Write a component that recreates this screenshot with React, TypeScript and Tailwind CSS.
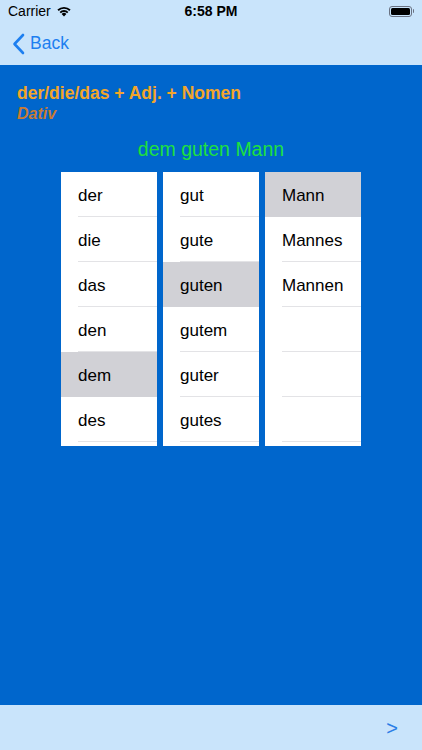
import React from "react";

const columns: { items: string[]; selected: number }[] = [
  { items: ["der", "die", "das", "den", "dem", "des"], selected: 4 },
  { items: ["gut", "gute", "guten", "gutem", "guter", "gutes"], selected: 2 },
  { items: ["Mann", "Mannes", "Mannen", "", "", ""], selected: 0 },
];

function StatusBar() {
  return (
    <div className="relative flex h-[22px] items-center px-2 text-[14px] text-black">
      <div className="flex items-center gap-[5px]">
        <span>Carrier</span>
        <svg width="16" height="12" viewBox="0 0 16 12">
          <path d="M8 11.5 L5.6 8.9 A3.4 3.4 0 0 1 10.4 8.9 Z" fill="black" />
          <path d="M3.6 6.9 A6.2 6.2 0 0 1 12.4 6.9 L11.1 8.2 A4.4 4.4 0 0 0 4.9 8.2 Z" fill="black" />
          <path d="M1.4 4.6 A9.4 9.4 0 0 1 14.6 4.6 L13.3 5.9 A7.6 7.6 0 0 0 2.7 5.9 Z" fill="black" />
        </svg>
      </div>
      <span className="absolute left-1/2 -translate-x-1/2 font-bold">6:58 PM</span>
      <div className="ml-auto flex items-center">
        <div className="flex h-[11px] w-[23px] items-center rounded-[3px] border border-gray-500 p-[1px]">
          <div className="h-full w-full rounded-[1.5px] bg-black" />
        </div>
        <div className="ml-[1px] h-[4px] w-[1.5px] rounded-r bg-gray-500" />
      </div>
    </div>
  );
}

function NavBar() {
  return (
    <div className="flex h-[43px] items-center pl-[12px] text-[#1d7ff0]">
      <svg width="13" height="22" viewBox="0 0 13 22" fill="none">
        <path d="M11 2 L2.5 11 L11 20" stroke="currentColor" strokeWidth="2.6" strokeLinecap="round" strokeLinejoin="round" />
      </svg>
      <span className="ml-[5px] text-[17.5px]">Back</span>
    </div>
  );
}

export default function App() {
  return (
    <div
      className="flex h-[750px] w-[422px] flex-col overflow-hidden bg-[#c9e4fb]"
      style={{ fontFamily: '"Liberation Sans", Arial, sans-serif' }}
    >
      <StatusBar />
      <NavBar />
      <main className="flex h-[640px] flex-col bg-[#0066cc] pt-[18px]">
        <div className="px-[17px]">
          <h1 className="text-[17.5px] font-bold leading-[20px] text-[#f2a52a]">der/die/das + Adj. + Nomen</h1>
          <p className="text-[16px] font-bold italic leading-[21px] text-[#c87b34]">Dativ</p>
        </div>
        <p className="mt-[14px] text-center text-[19.5px] leading-[22px] text-[#1fe03e]">dem guten Mann</p>
        <div className="mt-[12px] flex justify-center gap-[6px]">
          {columns.map((col, ci) => (
            <div key={ci} className="h-[274px] w-[96px] bg-white">
              {col.items.map((item, i) => (
                <div
                  key={i}
                  className={`relative flex h-[45px] items-center pl-[17px] pt-[2px] text-[17px] text-black ${
                    i === col.selected ? "bg-[#d1d1d6]" : ""
                  }`}
                >
                  {item}
                  {i !== col.selected && (
                    <div className="absolute bottom-0 left-[17px] right-0 h-px bg-[#e3e3e6]" />
                  )}
                </div>
              ))}
            </div>
          ))}
        </div>
      </main>
      <footer className="flex h-[45px] items-center justify-end pr-[24px]">
        <span className="text-[20px] font-light text-[#2a7de6]">&gt;</span>
      </footer>
    </div>
  );
}
